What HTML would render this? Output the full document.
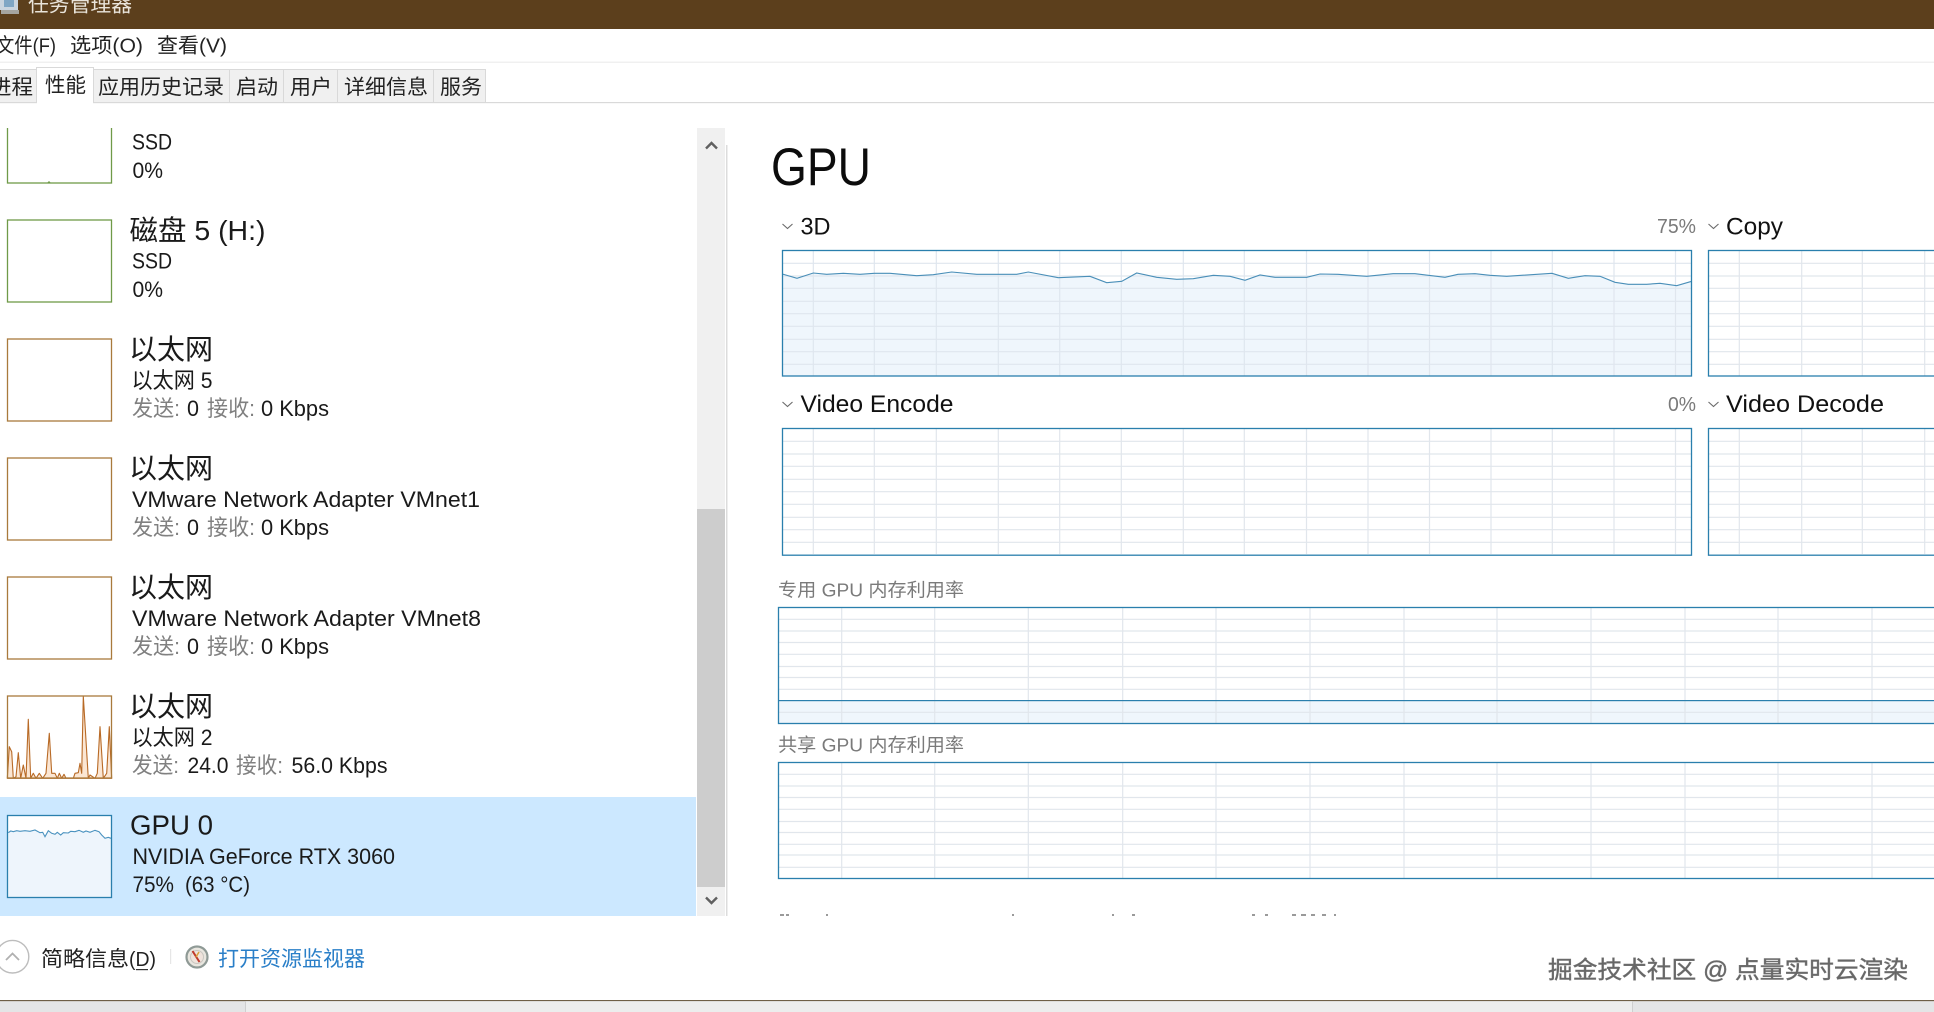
<!DOCTYPE html>
<html lang="zh">
<head>
<meta charset="utf-8">
<title>任务管理器</title>
<style>
html,body{margin:0;padding:0;width:1934px;height:1012px;overflow:hidden;background:#fff}
svg{display:block;position:absolute;left:0;top:0}
text{font-family:"Liberation Sans","Noto Sans CJK SC",sans-serif;fill:#1a1a1a}
.t{font-size:28px}
.s{font-size:22px}
.g{fill:#808080}
.h{font-size:24.5px;fill:#111}
.m{font-size:20.5px;fill:#222}
.l{font-size:18.5px;fill:#7a7a7a}
.p{font-size:20px;fill:#7a7a7a}
</style>
</head>
<body>
<svg width="1934" height="1012" viewBox="0 0 1934 1012" xmlns="http://www.w3.org/2000/svg">
<defs>
  <clipPath id="list"><rect x="0" y="128" width="697" height="788"/></clipPath>
  <path id="gh" d="M782 263.3H1692M782 276H1692M782 288.3H1692M782 301.3H1692M782 313.7H1692M782 326.3H1692M782 339.3H1692M782 351.7H1692M782 364.3H1692" fill="none"/>
  <path id="gv" d="M813.3 250V376M874.3 250V376M936.3 250V376M998.3 250V376M1059.7 250V376M1121.3 250V376M1183.3 250V376M1244.3 250V376M1306.5 250V376M1368 250V376M1429.5 250V376M1491 250V376M1552.3 250V376M1614 250V376M1675.5 250V376" fill="none"/>
  <path id="ch" d="M1708 263.3H1934M1708 276H1934M1708 288.3H1934M1708 301.3H1934M1708 313.7H1934M1708 326.3H1934M1708 339.3H1934M1708 351.7H1934M1708 364.3H1934M1739.3 250V376M1801.7 250V376M1862.3 250V376M1924.7 250V376" fill="none"/>
  <path id="mg" d="M778 619.3H1934M778 631H1934M778 642.5H1934M778 654.3H1934M778 666.5H1934M778 677.5H1934M778 689.3H1934M778 712.3H1934M841.7 607V723M934.7 607V723M1028.3 607V723M1122.7 607V723M1216 607V723M1310 607V723M1404 607V723M1497 607V723M1591 607V723M1685 607V723M1778 607V723M1872 607V723" fill="none"/>
</defs>

<!-- title bar -->
<rect width="1934" height="29" fill="#5c3f1c"/>
<g>
  <rect x="0" y="0" width="18" height="10" fill="#c9d4de"/>
  <rect x="4" y="0" width="10" height="7" fill="#7fa6c4"/>
  <rect x="1" y="10" width="18" height="4" fill="#a5a5a0"/>
</g>
<text x="28" y="11.5" font-size="20.7" style="fill:#e9e4da" textLength="104" lengthAdjust="spacingAndGlyphs">任务管理器</text>

<!-- menu -->
<text class="m" x="-4" y="52.5" textLength="60" lengthAdjust="spacingAndGlyphs">文件(F)</text>
<text class="m" x="70" y="52.5" textLength="73" lengthAdjust="spacingAndGlyphs">选项(O)</text>
<text class="m" x="157" y="52.5" textLength="70" lengthAdjust="spacingAndGlyphs">查看(V)</text>
<rect x="0" y="61.5" width="1934" height="1.5" fill="#f0f0f0"/>

<!-- tabs -->
<rect x="0" y="69" width="485" height="33" fill="#f0f0f0"/>
<path d="M0 69.5H36M94 69.5H485.5V102.5M36.5 69V102.5M229.5 69V102M283.5 69V102M337.5 69V102M433.5 69V102" fill="none" stroke="#d9d9d9" stroke-width="1"/>
<rect x="0" y="102" width="1934" height="1.2" fill="#d9d9d9"/>
<rect x="37" y="67" width="56" height="37" fill="#fff"/>
<path d="M36.5 103V67.5H93.5V103" fill="none" stroke="#d9d9d9" stroke-width="1"/>
<text class="m" x="-10" y="94" style="font-size:20.7px" textLength="43" lengthAdjust="spacingAndGlyphs">进程</text>
<text class="m" x="45" y="92" style="font-size:20.7px" textLength="41" lengthAdjust="spacingAndGlyphs">性能</text>
<text class="m" x="98" y="94" style="font-size:20.7px" textLength="126" lengthAdjust="spacingAndGlyphs">应用历史记录</text>
<text class="m" x="236" y="94" style="font-size:20.7px" textLength="42" lengthAdjust="spacingAndGlyphs">启动</text>
<text class="m" x="290" y="94" style="font-size:20.7px" textLength="42" lengthAdjust="spacingAndGlyphs">用户</text>
<text class="m" x="344" y="94" style="font-size:20.7px" textLength="84" lengthAdjust="spacingAndGlyphs">详细信息</text>
<text class="m" x="440" y="94" style="font-size:20.7px" textLength="42" lengthAdjust="spacingAndGlyphs">服务</text>

<!-- list -->
<g clip-path="url(#list)">
  <rect x="0" y="797" width="696" height="119" fill="#cce8ff"/>

  <!-- disk top -->
  <rect x="7.5" y="101" width="104" height="82" fill="#fff" stroke="#6f9a48" stroke-width="1.3"/>
  <path d="M47 183l2-2 2 2z" fill="#6f9a48"/>
  <text class="s" x="132" y="149.5" textLength="40" lengthAdjust="spacingAndGlyphs">SSD</text>
  <text class="s" x="132.5" y="178" textLength="30.5" lengthAdjust="spacingAndGlyphs">0%</text>

  <!-- disk 5 -->
  <rect x="7.5" y="220" width="104" height="82" fill="#fff" stroke="#6f9a48" stroke-width="1.3"/>
  <text class="t" x="129.5" y="240" textLength="136" lengthAdjust="spacingAndGlyphs">磁盘 5 (H:)</text>
  <text class="s" x="132" y="268.5" textLength="40" lengthAdjust="spacingAndGlyphs">SSD</text>
  <text class="s" x="132.5" y="297" textLength="30.5" lengthAdjust="spacingAndGlyphs">0%</text>

  <!-- eth 5 -->
  <rect x="7.5" y="339" width="104" height="82" fill="#fff" stroke="#a97a3c" stroke-width="1.3"/>
  <text class="t" x="129" y="359" textLength="84" lengthAdjust="spacingAndGlyphs">以太网</text>
  <text class="s" x="131.5" y="388" textLength="81" lengthAdjust="spacingAndGlyphs">以太网 5</text>
  <text class="s g" x="132" y="416" textLength="48" lengthAdjust="spacingAndGlyphs">发送:</text>
  <text class="s" x="187" y="416" textLength="12" lengthAdjust="spacingAndGlyphs">0</text>
  <text class="s g" x="207" y="416" textLength="48" lengthAdjust="spacingAndGlyphs">接收:</text>
  <text class="s" x="261" y="416" textLength="68" lengthAdjust="spacingAndGlyphs">0 Kbps</text>

  <!-- eth vmnet1 -->
  <rect x="7.5" y="458" width="104" height="82" fill="#fff" stroke="#a97a3c" stroke-width="1.3"/>
  <text class="t" x="129" y="478" textLength="84" lengthAdjust="spacingAndGlyphs">以太网</text>
  <text class="s" x="132" y="507" textLength="348" lengthAdjust="spacingAndGlyphs">VMware Network Adapter VMnet1</text>
  <text class="s g" x="132" y="535" textLength="48" lengthAdjust="spacingAndGlyphs">发送:</text>
  <text class="s" x="187" y="535" textLength="12" lengthAdjust="spacingAndGlyphs">0</text>
  <text class="s g" x="207" y="535" textLength="48" lengthAdjust="spacingAndGlyphs">接收:</text>
  <text class="s" x="261" y="535" textLength="68" lengthAdjust="spacingAndGlyphs">0 Kbps</text>

  <!-- eth vmnet8 -->
  <rect x="7.5" y="577" width="104" height="82" fill="#fff" stroke="#a97a3c" stroke-width="1.3"/>
  <text class="t" x="129" y="597" textLength="84" lengthAdjust="spacingAndGlyphs">以太网</text>
  <text class="s" x="132" y="626" textLength="349" lengthAdjust="spacingAndGlyphs">VMware Network Adapter VMnet8</text>
  <text class="s g" x="132" y="654" textLength="48" lengthAdjust="spacingAndGlyphs">发送:</text>
  <text class="s" x="187" y="654" textLength="12" lengthAdjust="spacingAndGlyphs">0</text>
  <text class="s g" x="207" y="654" textLength="48" lengthAdjust="spacingAndGlyphs">接收:</text>
  <text class="s" x="261" y="654" textLength="68" lengthAdjust="spacingAndGlyphs">0 Kbps</text>

  <!-- eth 2 -->
  <rect x="7.5" y="696" width="104" height="82" fill="#fff"/>
  <path d="M7.3 778.3L9.3 746.7 11.7 751.7 13.3 778.3 16 776.7 18.3 752.7 20.7 778.3 23.3 765 26 778.3 28.3 719.3 30.7 778.3 33.3 773.3 36 778.3 39.3 773.3 42.7 778.3 46 773.3 49.3 733.3 51.7 773.3 55 773.3 57.3 778.3 59.3 773.3 61.7 778.3 64 774.3 66 778.3 73.3 778.3 75 773.3 78.3 772.7 80 763.3 81.7 773.3 83.3 696 88.3 778.3 90 775 95 778.3 97.3 773.3 100 726.7 103.3 778.3 106.7 773.3 109.3 726.7 111.7 778.3Z" fill="#fbe6d3" stroke="#b86a26" stroke-width="1.1" stroke-linejoin="round"/>
  <rect x="7.5" y="696" width="104" height="82" fill="none" stroke="#a97a3c" stroke-width="1.3"/>
  <text class="t" x="129" y="716" textLength="84" lengthAdjust="spacingAndGlyphs">以太网</text>
  <text class="s" x="131.5" y="745" textLength="81" lengthAdjust="spacingAndGlyphs">以太网 2</text>
  <text class="s g" x="132" y="773" textLength="47" lengthAdjust="spacingAndGlyphs">发送:</text>
  <text class="s" x="187.5" y="773" textLength="41" lengthAdjust="spacingAndGlyphs">24.0</text>
  <text class="s g" x="236" y="773" textLength="47" lengthAdjust="spacingAndGlyphs">接收:</text>
  <text class="s" x="291.5" y="773" textLength="96" lengthAdjust="spacingAndGlyphs">56.0 Kbps</text>

  <!-- gpu 0 -->
  <rect x="7.5" y="815" width="104" height="82" fill="#fff"/>
  <path d="M8.3 832.7L10.7 831 13.3 831.7 16.7 830.7 20 831.3 25 830.7 30 831.3 35 830 40 832.7 42.7 832.3 45 836.7 48.3 830.7 51.7 833.3 55 834.3 57.3 832.3 60.7 835 63.3 832.7 68.3 833 70.7 831.3 75 831.7 79 830.3 83.3 832.3 86 831 90 832.3 95 830.3 99 831.7 101.7 835 105 838.3 108.3 837.3 111 838.3V897H8.3Z" fill="#eef5fc"/>
  <path d="M8.3 832.7L10.7 831 13.3 831.7 16.7 830.7 20 831.3 25 830.7 30 831.3 35 830 40 832.7 42.7 832.3 45 836.7 48.3 830.7 51.7 833.3 55 834.3 57.3 832.3 60.7 835 63.3 832.7 68.3 833 70.7 831.3 75 831.7 79 830.3 83.3 832.3 86 831 90 832.3 95 830.3 99 831.7 101.7 835 105 838.3 108.3 837.3 111 838.3" fill="none" stroke="#4a92bf" stroke-width="1.1"/>
  <rect x="7.5" y="815.5" width="104" height="82" fill="none" stroke="#2a7fad" stroke-width="1.3"/>
  <text class="t" x="130" y="834.5" textLength="83" lengthAdjust="spacingAndGlyphs">GPU 0</text>
  <text class="s" x="132.5" y="864" textLength="262.5" lengthAdjust="spacingAndGlyphs">NVIDIA GeForce RTX 3060</text>
  <text class="s" x="132.5" y="892" textLength="41.5" lengthAdjust="spacingAndGlyphs">75%</text>
  <text class="s" x="185" y="892" textLength="65" lengthAdjust="spacingAndGlyphs">(63 °C)</text>
</g>

<!-- scrollbar -->
<rect x="697" y="128" width="28" height="788" fill="#f0f0f0"/>
<rect x="726" y="145" width="1.5" height="771" fill="#dcdcdc"/>
<rect x="697" y="509" width="28" height="378" fill="#cdcdcd"/>
<path d="M706 148.5l5.5-5.5 5.5 5.5" fill="none" stroke="#606060" stroke-width="2.4"/>
<path d="M706 897.5l5.5 5.5 5.5-5.5" fill="none" stroke="#606060" stroke-width="2.4"/>

<!-- right heading -->
<text x="771" y="185" font-size="53" style="fill:#0c0c0c" textLength="100" lengthAdjust="spacingAndGlyphs">GPU</text>

<!-- section labels -->
<path d="M782.5 224l5 4.5 5-4.5" fill="none" stroke="#6a6a6a" stroke-width="1.1"/>
<text class="h" x="800.5" y="234.3" textLength="30" lengthAdjust="spacingAndGlyphs">3D</text>
<text class="p" x="1657" y="233" textLength="39" lengthAdjust="spacingAndGlyphs">75%</text>
<path d="M1708.5 224l5 4.5 5-4.5" fill="none" stroke="#6a6a6a" stroke-width="1.1"/>
<text class="h" x="1726" y="234.3" textLength="57" lengthAdjust="spacingAndGlyphs">Copy</text>

<path d="M782.5 402l5 4.5 5-4.5" fill="none" stroke="#6a6a6a" stroke-width="1.1"/>
<text class="h" x="800.5" y="412" textLength="153" lengthAdjust="spacingAndGlyphs">Video Encode</text>
<text class="p" x="1668" y="411" textLength="28" lengthAdjust="spacingAndGlyphs">0%</text>
<path d="M1708.5 402l5 4.5 5-4.5" fill="none" stroke="#6a6a6a" stroke-width="1.1"/>
<text class="h" x="1726" y="412" textLength="158" lengthAdjust="spacingAndGlyphs">Video Decode</text>

<!-- 3D graph -->
<path d="M782.3 274L797 278.3 813.3 273 826.7 274.3 843.3 273.3 860 274.3 874.3 273.3 890 273.3 916.7 275.7 933.3 274.7 951.7 272 976.7 274.3 1016.7 274.3 1028.3 272 1058.3 277.7 1090 276.3 1106.7 282.7 1121.7 281.3 1136.7 273 1156.7 277.3 1176.7 279.3 1193.3 278.7 1213.3 275.3 1230 276.3 1245 280.3 1260 275 1275 277.3 1306.7 277.3 1320 274 1338 274.3 1366.7 276.3 1393 273.7 1415 273.7 1445 277.3 1458 274.3 1475 273.7 1490 275.3 1506.7 276.3 1552 273.3 1568.3 278.3 1585 275.7 1600 276.3 1615 282.3 1628.3 284.3 1646.7 284.3 1660 283.3 1676.7 285.7 1691.7 281.3V376H782.3Z" fill="#eff6fc"/>
<g stroke="#dfe6ee" stroke-width="1.2"><use href="#gh"/><use href="#gv"/></g>
<path d="M782.3 274L797 278.3 813.3 273 826.7 274.3 843.3 273.3 860 274.3 874.3 273.3 890 273.3 916.7 275.7 933.3 274.7 951.7 272 976.7 274.3 1016.7 274.3 1028.3 272 1058.3 277.7 1090 276.3 1106.7 282.7 1121.7 281.3 1136.7 273 1156.7 277.3 1176.7 279.3 1193.3 278.7 1213.3 275.3 1230 276.3 1245 280.3 1260 275 1275 277.3 1306.7 277.3 1320 274 1338 274.3 1366.7 276.3 1393 273.7 1415 273.7 1445 277.3 1458 274.3 1475 273.7 1490 275.3 1506.7 276.3 1552 273.3 1568.3 278.3 1585 275.7 1600 276.3 1615 282.3 1628.3 284.3 1646.7 284.3 1660 283.3 1676.7 285.7 1691.7 281.3" fill="none" stroke="#4a8fb8" stroke-width="1.1"/>
<rect x="782.5" y="250.5" width="909" height="125.5" fill="none" stroke="#2a7fad" stroke-width="1.3"/>

<!-- Copy graph -->
<g stroke="#e1e6ec" stroke-width="1.2"><use href="#ch"/></g>
<rect x="1708.5" y="250.5" width="240" height="125.5" fill="none" stroke="#2a7fad" stroke-width="1.3"/>

<!-- Video Encode graph -->
<g transform="translate(0,178)">
  <g stroke="#e1e6ec" stroke-width="1.2"><use href="#gh"/><use href="#gv"/></g>
  <rect x="782.5" y="250.5" width="909" height="126.7" fill="none" stroke="#2a7fad" stroke-width="1.3"/>
  <g stroke="#e1e6ec" stroke-width="1.2"><use href="#ch"/></g>
  <rect x="1708.5" y="250.5" width="240" height="126.7" fill="none" stroke="#2a7fad" stroke-width="1.3"/>
</g>

<!-- Memory labels & graphs -->
<text class="l" x="778" y="596.5" textLength="186" lengthAdjust="spacingAndGlyphs">专用 GPU 内存利用率</text>
<rect x="778" y="700" width="1156" height="23" fill="#eff6fc"/>
<g stroke="#e1e6ec" stroke-width="1.2"><use href="#mg"/></g>
<rect x="778.5" y="607.5" width="1170" height="116" fill="none" stroke="#2a7fad" stroke-width="1.3"/>
<rect x="778" y="700" width="1156" height="1.2" fill="#2a7fad"/>

<text class="l" x="778" y="751.5" textLength="186" lengthAdjust="spacingAndGlyphs">共享 GPU 内存利用率</text>
<g transform="translate(0,155)">
  <g stroke="#e1e6ec" stroke-width="1.2"><use href="#mg"/></g>
  <path d="M778 700H1934" stroke="#e1e6ec" stroke-width="1.2"/>
  <rect x="778.5" y="607.5" width="1170" height="116" fill="none" stroke="#2a7fad" stroke-width="1.3"/>
</g>

<!-- clipped next label fragments -->
<g fill="#9a9a9a">
  <rect x="780" y="914" width="4" height="2"/><rect x="786" y="914" width="3" height="2"/><rect x="826" y="914" width="2" height="2"/>
  <rect x="1012" y="914" width="2" height="2"/><rect x="1112" y="914" width="2" height="2"/><rect x="1132" y="914" width="3" height="2"/>
  <rect x="1252" y="914" width="3" height="2"/><rect x="1265" y="914" width="3" height="2"/><rect x="1292" y="914" width="4" height="2"/>
  <rect x="1301" y="914" width="5" height="2"/><rect x="1311" y="914" width="4" height="2"/><rect x="1322" y="914" width="4" height="2"/><rect x="1334" y="914" width="2" height="2"/>
</g>

<!-- footer -->
<circle cx="12.5" cy="956.7" r="16.3" fill="#fff" stroke="#bdbdbd" stroke-width="1.4"/>
<path d="M6 960l6.5-6.5 6.5 6.5" fill="none" stroke="#b0b0b0" stroke-width="1.8"/>
<text x="41" y="966" font-size="21" style="fill:#222" textLength="88" lengthAdjust="spacingAndGlyphs">简略信息</text>
<text x="129" y="966" font-size="20" style="fill:#222" textLength="27" lengthAdjust="spacingAndGlyphs">(D)</text>
<rect x="136" y="969" width="12" height="1.2" fill="#333"/>
<rect x="170" y="949" width="1.2" height="15" fill="#e6e6e6"/>
<circle cx="197" cy="957" r="10.5" fill="#e9e6df" stroke="#8f9a96" stroke-width="2.2"/>
<circle cx="197" cy="957" r="6.5" fill="#efe3dc" stroke="#c9c6c0" stroke-width="1"/>
<path d="M192.5 951l7 11" stroke="#c0392b" stroke-width="2"/>
<path d="M199 952l-3 5" stroke="#d8a23a" stroke-width="1.5"/>
<text x="218" y="966" font-size="21" style="fill:#2a7fc8" textLength="147" lengthAdjust="spacingAndGlyphs">打开资源监视器</text>

<!-- watermark -->
<text x="1549" y="979" font-size="24" style="fill:#fff" textLength="360" lengthAdjust="spacingAndGlyphs">掘金技术社区 @ 点量实时云渲染</text>
<text x="1548" y="978" font-size="24" style="fill:#666;stroke:#777;stroke-width:.5" textLength="360" lengthAdjust="spacingAndGlyphs">掘金技术社区 @ 点量实时云渲染</text>

<!-- bottom edge -->
<rect x="0" y="1000" width="1934" height="1.3" fill="#6e5f47"/>
<rect x="0" y="1001.3" width="1934" height="10.7" fill="#e4e5e6"/>
<rect x="245" y="1001.3" width="1388" height="10.7" fill="#eceded"/>
<rect x="245" y="1001" width="1" height="11" fill="#cfcfcf"/>
<rect x="1632" y="1001" width="1" height="11" fill="#cfcfcf"/>
</svg>
</body>
</html>
